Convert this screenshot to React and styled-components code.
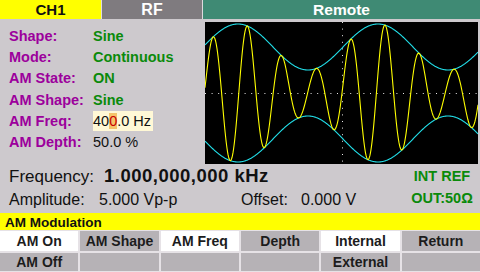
import React from 'react'
import styled, { createGlobalStyle } from 'styled-components'

const GlobalStyle = createGlobalStyle`
  html, body {
    margin: 0;
    padding: 0;
    background: #cdc9cd;
  }
  body {
    font-family: "Liberation Sans", Arial, sans-serif;
  }
`

const Screen = styled.div`
  width: 480px;
  height: 272px;
  display: flex;
  flex-direction: column;
  background: #cdc9cd;
  overflow: hidden;
  color: #111;
`

const TabBar = styled.div`
  height: 19px;
  display: flex;
  gap: 1px;
  background: #dedade;
`

const Tab = styled.div`
  width: ${p => p.$width || 'auto'};
  flex: ${p => (p.$width ? 'none' : '1')};
  background: ${p => p.$bg};
  color: ${p => p.$fg};
  font-weight: bold;
  font-size: ${p => p.$size || 14}px;
  line-height: 19px;
  text-align: center;
`

const Body = styled.div`
  flex: 1;
  display: flex;
  flex-direction: column;
`

const TopRow = styled.div`
  height: 145px;
  display: flex;
`

const ParamList = styled.div`
  flex: 1;
  padding: 7px 0 0 9px;
  display: grid;
  grid-template-columns: 84px auto;
  grid-auto-rows: 21.2px;
  align-content: start;
  font-size: 14.5px;
  font-weight: bold;
  line-height: 21.2px;
`

const Label = styled.div`
  color: #9c009c;
  white-space: nowrap;
`

const Value = styled.div`
  color: ${p => (p.$plain ? '#111' : '#0a8a0a')};
  font-weight: ${p => (p.$plain ? 'normal' : 'bold')};
  white-space: nowrap;
`

const EditBox = styled.span`
  display: inline-block;
  background: #fff8d6;
  color: #111;
  font-weight: normal;
  line-height: 20px;
  padding-right: 2px;
`

const Cursor = styled.span`
  background: #f4c46a;
  color: #c80000;
`

const Scope = styled.div`
  width: 273px;
  height: 142px;
  margin: 3px 2px 0 auto;
  background: #000;
  svg {
    display: block;
  }
`

const BottomRow = styled.div`
  flex: 1;
  display: flex;
  padding-top: 1px;
`

const Readout = styled.div`
  flex: 1;
  padding-left: 9px;
`

const FreqLine = styled.div`
  display: flex;
  align-items: baseline;
  line-height: 22px;
  font-size: 17px;
  white-space: nowrap;
`

const AmpLine = styled.div`
  display: grid;
  grid-template-columns: 232px auto;
  line-height: 24px;
  font-size: 16px;
  white-space: nowrap;
`

const Field = styled.div`
  display: flex;
`

const FieldLabel = styled.span`
  width: ${p => p.$w}px;
  flex: none;
`

const BigValue = styled.span`
  font-weight: bold;
  font-size: 18.5px;
  letter-spacing: 0.5px;
`

const Status = styled.div`
  width: 72px;
  margin-right: 2px;
  text-align: center;
  color: #0a8a0a;
  font-weight: bold;
  font-size: 14.5px;
  line-height: 22px;
`

const MenuTitle = styled.div`
  height: 17px;
  background: #ffff00;
  color: #111;
  font-weight: bold;
  font-size: 13.5px;
  line-height: 19px;
  padding-left: 5px;
`

const Keys = styled.div`
  height: 42px;
  box-sizing: border-box;
  padding: 1px 0;
  display: grid;
  grid-template-columns: repeat(6, 1fr);
  grid-template-rows: 20px 18px;
  grid-auto-flow: column;
  gap: 2px;
  background: #e6e2e6;
`

const Key = styled.div`
  background: ${p => (p.$active ? '#ffffff' : '#b6b2b6')};
  color: #1c1c1c;
  font-weight: bold;
  font-size: 14px;
  line-height: ${p => (p.$top ? 21 : 19)}px;
  text-align: center;
`

const W = 273
const H = 142
const MID = H / 2

const env = x => 46 + 23 * Math.cos((2 * Math.PI * (x - 33)) / 140)
const carrier = x => MID - env(x) * Math.cos((2 * Math.PI * (x - 8)) / 34.4)

function points(fn) {
  const pts = []
  for (let x = 0; x <= W; x += 0.5) pts.push(`${x},${fn(x).toFixed(2)}`)
  return pts.join(' ')
}

function ScopeTrace() {
  return (
    <svg width={W} height={H} viewBox={`0 0 ${W} ${H}`}>
      <line x1="0" y1={MID + 0.5} x2={W} y2={MID + 0.5} stroke="#e8e8e8" strokeDasharray="1 5.6" />
      <line x1="137.5" y1="0" x2="137.5" y2={H} stroke="#e8e8e8" strokeDasharray="1 5.6" />
      <polyline points={points(x => MID - env(x))} fill="none" stroke="#22e0ea" strokeWidth="1.1" />
      <polyline points={points(x => MID + env(x))} fill="none" stroke="#22e0ea" strokeWidth="1.1" />
      <polyline points={points(carrier)} fill="none" stroke="#ffff00" strokeWidth="1.1" />
    </svg>
  )
}

const params = [
  ['Shape:', 'Sine'],
  ['Mode:', 'Continuous'],
  ['AM State:', 'ON'],
  ['AM Shape:', 'Sine'],
]

const keys = [
  ['AM On', true, 'AM Off', false],
  ['AM Shape', false, '', false],
  ['AM Freq', true, '', false],
  ['Depth', false, '', false],
  ['Internal', true, 'External', false],
  ['Return', false, '', false],
]

export default function App() {
  return (
    <Screen>
      <GlobalStyle />
      <TabBar>
        <Tab $width="101px" $bg="#ffff00" $fg="#111" $size={15}>CH1</Tab>
        <Tab $width="100px" $bg="#7f7b7f" $fg="#fff" $size={16}>RF</Tab>
        <Tab $bg="#3f8a74" $fg="#fff" $size={15.5}>Remote</Tab>
      </TabBar>
      <Body>
        <TopRow>
          <ParamList>
            {params.map(([l, v]) => (
              <React.Fragment key={l}>
                <Label>{l}</Label>
                <Value>{v}</Value>
              </React.Fragment>
            ))}
            <Label>AM Freq:</Label>
            <Value $plain>
              <EditBox>40<Cursor>0</Cursor>.0 Hz</EditBox>
            </Value>
            <Label>AM Depth:</Label>
            <Value $plain>50.0 %</Value>
          </ParamList>
          <Scope>
            <ScopeTrace />
          </Scope>
        </TopRow>
        <BottomRow>
          <Readout>
            <FreqLine>
              <FieldLabel $w={95}>Frequency:</FieldLabel>
              <BigValue>1.000,000,000 kHz</BigValue>
            </FreqLine>
            <AmpLine>
              <Field>
                <FieldLabel $w={90}>Amplitude:</FieldLabel>
                <span>5.000 Vp-p</span>
              </Field>
              <Field>
                <FieldLabel $w={60}>Offset:</FieldLabel>
                <span>0.000 V</span>
              </Field>
            </AmpLine>
          </Readout>
          <Status>
            <div>INT REF</div>
            <div>OUT:50Ω</div>
          </Status>
        </BottomRow>
      </Body>
      <MenuTitle>AM Modulation</MenuTitle>
      <Keys>
        {keys.map(([a, aOn, b, bOn]) => (
          <React.Fragment key={a}>
            <Key $top $active={aOn}>{a}</Key>
            <Key $active={bOn}>{b}</Key>
          </React.Fragment>
        ))}
      </Keys>
    </Screen>
  )
}
